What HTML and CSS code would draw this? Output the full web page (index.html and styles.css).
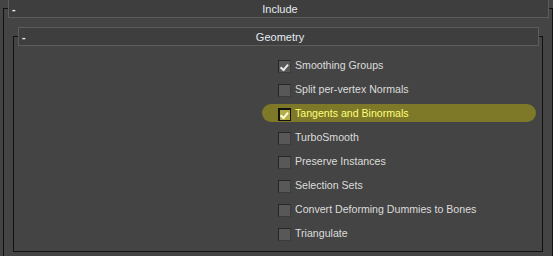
FILE: index.html
```html
<!DOCTYPE html>
<html>
<head>
<meta charset="utf-8">
<link rel="stylesheet" href="styles.css">
</head>
<body>
<div class="frame outer">
  <div class="hdr"><span class="dash">-</span><span class="title">Include</span></div>
  <div class="frame inner">
    <div class="hdr"><span class="dash">-</span><span class="title">Geometry</span></div>
    <ul class="list">
      <li class="row"><span class="cb on"></span><span class="lbl">Smoothing Groups</span></li>
      <li class="row"><span class="cb"></span><span class="lbl">Split per-vertex Normals</span></li>
      <li class="row hl"><span class="cb on"></span><span class="lbl">Tangents and Binormals</span></li>
      <li class="row"><span class="cb"></span><span class="lbl">TurboSmooth</span></li>
      <li class="row"><span class="cb"></span><span class="lbl">Preserve Instances</span></li>
      <li class="row"><span class="cb"></span><span class="lbl">Selection Sets</span></li>
      <li class="row"><span class="cb"></span><span class="lbl">Convert Deforming Dummies to Bones</span></li>
      <li class="row"><span class="cb"></span><span class="lbl">Triangulate</span></li>
    </ul>
  </div>
</div>
</body>
</html>
```
FILE: styles.css
```css
html, body {
  margin: 0;
  padding: 0;
  height: 256px;
  overflow: hidden;
  background: #444444;
  font-family: "Liberation Sans", Arial, sans-serif;
  font-size: 10.6px;
  color: #dcdcdc;
}

.frame {
  border: 1px solid #111111;
  box-sizing: border-box;
}

.outer {
  margin: 8px 0 0 3px;
  width: 550px;
  height: 260px;
  border-bottom: none;
}

.inner {
  margin: 18px 9px 0 9px;
  height: 216px;
}

.hdr {
  margin: -10px 3px 0 4px;
  height: 19px;
  box-sizing: border-box;
  background: #3e3e3e;
  border: 1px solid #5c5c5c;
  display: flex;
  align-items: center;
}

.dash {
  width: 0;
  padding-left: 3px;
  color: #f0f0f0;
  font-weight: bold;
}

.title {
  flex: 1;
  text-align: center;
  color: #e4eaf0;
  font-size: 11px;
}

.list {
  list-style: none;
  margin: 10px 0 0 248px;
  padding: 0;
  width: 274px;
}

.row {
  height: 24px;
  display: flex;
  align-items: flex-start;
  position: relative;
}

.row .cb {
  margin-top: 4px;
}

.row .lbl {
  margin-top: 3px;
}

.row.hl::before {
  content: "";
  position: absolute;
  left: 0;
  top: 0;
  width: 274px;
  height: 18px;
  border-radius: 9px;
  background: #7e7928;
}

.cb {
  position: relative;
  width: 13px;
  height: 13px;
  box-sizing: border-box;
  margin-left: 16px;
  margin-right: 4px;
  background: #585858;
  border: 1px solid #262626;
  border-right-color: #3c3c3c;
  border-bottom-color: #3c3c3c;
  flex: none;
}

.cb.on::after {
  content: "";
  position: absolute;
  width: 3px;
  height: 6px;
  border: solid #e8e8e8;
  border-width: 0 2px 2px 0;
  transform: rotate(40deg);
  transform-origin: 0 0;
  left: 6px;
  top: 1px;
}

.hl .cb {
  background: #b5ad45;
  border-width: 2px 1px 1px 2px;
  border-color: #111111;
}

.hl .cb.on::after {
  border-color: #ffffe0;
  left: 5px;
  top: 0px;
}

.lbl {
  position: relative;
  line-height: 13px;
  white-space: nowrap;
}

.hl .lbl {
  color: #ffff7a;
}
```
